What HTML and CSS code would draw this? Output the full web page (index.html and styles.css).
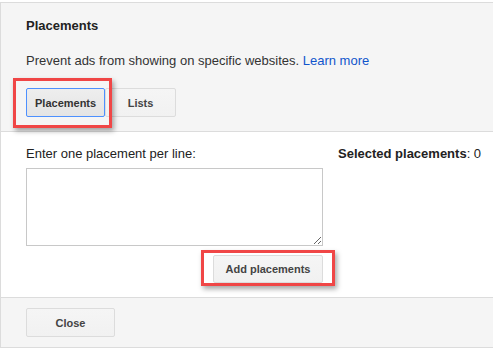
FILE: index.html
```html
<!DOCTYPE html>
<html lang="en">
<head>
    <meta charset="UTF-8">
    <title>Placements</title>
    <link rel="stylesheet" href="styles.css">
</head>
<body>
    <div class="panel">
        <div class="panel-head">
            <h3>Placements</h3>
            <p class="intro">Prevent ads from showing on specific websites. <a href="#">Learn more</a></p>
            <div class="tabs">
                <span class="marked">
                    <button class="btn tab active">Placements</button>
                    <span class="mark mark-tab"></span>
                </span>
                <button class="btn tab">Lists</button>
            </div>
        </div>

        <div class="panel-body">
            <div class="entry">
                <label for="placements">Enter one placement per line:</label>
                <textarea id="placements"></textarea>
                <div class="entry-actions">
                    <span class="marked">
                        <button class="btn btn-add">Add placements</button>
                        <span class="mark mark-add"></span>
                    </span>
                </div>
            </div>
            <div class="selected"><b>Selected placements</b>: 0</div>
        </div>

        <div class="panel-foot">
            <button class="btn btn-close">Close</button>
        </div>
    </div>
</body>
</html>
```

FILE: styles.css
```css
* {
    margin: 0;
    padding: 0;
    box-sizing: border-box;
    font-family: "Liberation Sans", Arial, sans-serif;
}
body {
    background: #fff;
    padding-top: 2px;
    color: #333;
    font-size: 13px;
}
.panel {
    border: 1px solid #dcdcdc;
    border-right: none;
}
.panel-head {
    background: #f5f5f5;
    padding: 15px 25px 14px;
    border-bottom: 1px solid #dcdcdc;
}
h3 {
    font-size: 13px;
    line-height: 15px;
    color: #222;
}
.intro {
    margin-top: 20px;
    line-height: 15px;
    color: #333;
}
.intro a {
    color: #15c;
    text-decoration: none;
}
.tabs {
    display: flex;
    margin-top: 20px;
}
.btn {
    height: 29px;
    padding: 0 8px;
    font-size: 11px;
    font-weight: bold;
    color: #444;
    background: linear-gradient(#f5f5f5, #f1f1f1);
    border: 1px solid #dcdcdc;
    border-radius: 2px;
    cursor: pointer;
}
.tab {
    min-width: 71px;
}
.tab.active {
    background: linear-gradient(#eeeeee, #e4e4e4);
    border-color: #4d90fe;
    color: #333;
    width: 79px;
}
.marked {
    position: relative;
    display: inline-flex;
}
.mark {
    position: absolute;
    border: 3px solid #f04646;
    box-shadow: 2px 3px 5px rgba(0, 0, 0, 0.35);
    pointer-events: none;
}
.mark-tab {
    left: -13px;
    top: -10px;
    right: -7px;
    bottom: -11px;
}
.mark-add {
    left: -12px;
    top: -5px;
    right: -12px;
    bottom: -3px;
}
.panel-body {
    display: flex;
    padding: 14px 25px 14px;
    border-bottom: 1px solid #dcdcdc;
}
.entry {
    width: 297px;
    flex-shrink: 0;
}
label {
    display: block;
    line-height: 15px;
    color: #222;
}
textarea {
    display: block;
    width: 297px;
    height: 78px;
    margin-top: 7px;
    border: 1px solid #c8c8c8;
    font-size: 13px;
}
.entry-actions {
    display: flex;
    justify-content: flex-end;
    margin-top: 9px;
}
.btn-add {
    width: 110px;
    height: 28px;
}
.selected {
    margin-left: 15px;
    line-height: 15px;
    color: #222;
    white-space: nowrap;
}
.panel-foot {
    background: #f5f5f5;
    padding: 10px 25px;
}
.btn-close {
    width: 89px;
}
```
